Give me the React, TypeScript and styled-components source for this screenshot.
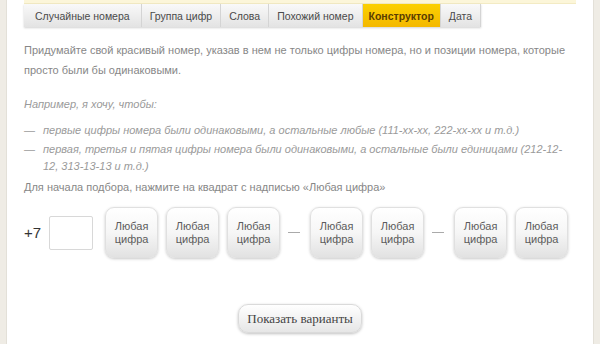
import React from 'react'
import styled, { createGlobalStyle } from 'styled-components'

const GlobalStyle = createGlobalStyle`
	html, body {
		margin: 0;
		padding: 0;
		background: #fff;
	}
	body {
		font-family: 'Liberation Sans', Arial, sans-serif;
		width: 600px;
		height: 344px;
		overflow: hidden;
	}
`

const Page = styled.div`
	display: flex;
	width: 600px;
	height: 344px;
`
const Rail = styled.div`
	width: 6px;
	flex-shrink: 0;
	background: #efece5;
	border-right: 1px solid #e3e0d8;
`
const RightRail = styled.div`
	width: 6px;
	flex-shrink: 0;
	background: #efece5;
	border-left: 1px solid #e3e0d8;
`
const Main = styled.div`
	flex: 1;
	padding: 0 17px 0 17px;
	display: flex;
	flex-direction: column;
`
const TopStrip = styled.div`
	height: 3px;
	background: #fcf6d9;
	border-bottom: 1px solid #f3ebc4;
`
const Tabs = styled.div`
	display: flex;
	height: 23px;
	align-self: flex-start;
	box-shadow: 0 1px 2px rgba(0, 0, 0, 0.18);
`
const Tab = styled.div<{ $active?: boolean }>`
	display: flex;
	align-items: center;
	padding: 0 ${(p) => (p.$active ? 6 : 8)}px;
	font-size: 10.5px;
	color: ${(p) => (p.$active ? '#5a3d00' : '#4a4a4a')};
	font-weight: ${(p) => (p.$active ? 'bold' : 'normal')};
	background: ${(p) =>
		p.$active
			? 'linear-gradient(#fbd000, #f4b800)'
			: 'linear-gradient(#f9f9f9, #e3e3e3)'};
	border-right: 1px solid #d4d4d4;
	white-space: nowrap;
	&:first-child {
		padding: 0 11px;
	}
`
const Content = styled.div`
	padding-top: 13px;
	font-size: 11px;
	line-height: 20px;
	color: #878787;
`
const Intro = styled.p`
	margin: 0 0 14px;
`
const Example = styled.p`
	margin: 0 0 8px;
	font-style: italic;
	color: #9a9a9a;
`
const List = styled.ul`
	margin: 0;
	padding: 0;
	list-style: none;
	font-style: italic;
	color: #9a9a9a;
`
const Item = styled.li`
	display: flex;
	line-height: 17px;
	margin-bottom: 2px;
	> span:first-child {
		width: 19px;
		flex-shrink: 0;
		font-style: normal;
	}
`
const Hint = styled.p`
	margin: 0;
	line-height: 20px;
`
const NumberRow = styled.div`
	display: flex;
	align-items: center;
	margin-top: 10px;
`
const Prefix = styled.span`
	font-size: 15px;
	color: #333;
	margin-right: 8px;
`
const CodeBox = styled.div`
	width: 42px;
	height: 32px;
	border: 1px solid #d8d8d8;
	border-radius: 2px;
	margin-right: 12px;
	background: #fff;
`
const Digit = styled.button`
	width: 53px;
	height: 51px;
	margin-right: 8px;
	border: 1px solid #e0e0e0;
	border-radius: 9px;
	background: linear-gradient(#ffffff 0%, #f6f6f6 50%, #e2e2e2 100%);
	box-shadow: 0 1px 3px rgba(0, 0, 0, 0.22);
	font-family: 'Liberation Sans', Arial, sans-serif;
	font-size: 11px;
	line-height: 13px;
	color: #5c5c5c;
	padding: 0;
	cursor: pointer;
`
const Dash = styled.span`
	width: 12px;
	height: 1px;
	background: #aaa;
	margin: 0 10px 0 0;
`
const Footer = styled.div`
	display: flex;
	justify-content: center;
	margin-top: 46px;
`
const ShowButton = styled.button`
	width: 124px;
	height: 29px;
	border: 1px solid #dadada;
	border-radius: 10px;
	background: linear-gradient(#ffffff, #e6e6e6);
	box-shadow: 0 1px 3px rgba(0, 0, 0, 0.25);
	font-family: 'Liberation Serif', 'Times New Roman', serif;
	font-size: 13px;
	color: #444;
	padding: 0;
	cursor: pointer;
`

const tabs = ['Случайные номера', 'Группа цифр', 'Слова', 'Похожий номер', 'Конструктор', 'Дата']
const groups = [3, 2, 2]

const App = () => {
	return (
		<Page>
			<GlobalStyle />
			<Rail />
			<Main>
				<TopStrip />
				<Tabs>
					{tabs.map((t) => (
						<Tab key={t} $active={t === 'Конструктор'}>
							{t}
						</Tab>
					))}
				</Tabs>
				<Content>
					<Intro>
						Придумайте свой красивый номер, указав в нем не только цифры номера, но и позиции номера, которые
						просто были бы одинаковыми.
					</Intro>
					<Example>Например, я хочу, чтобы:</Example>
					<List>
						<Item>
							<span>—</span>
							<span>первые цифры номера были одинаковыми, а остальные любые (111-хх-хх, 222-хх-хх и т.д.)</span>
						</Item>
						<Item>
							<span>—</span>
							<span>
								первая, третья и пятая цифры номера были одинаковыми, а остальные были единицами (212-12-12,
								313-13-13 и т.д.)
							</span>
						</Item>
					</List>
					<Hint>Для начала подбора, нажмите на квадрат с надписью «Любая цифра»</Hint>
					<NumberRow>
						<Prefix>+7</Prefix>
						<CodeBox />
						{groups.map((n, gi) => (
							<React.Fragment key={gi}>
								{gi > 0 && <Dash />}
								{Array.from({ length: n }).map((_, i) => (
									<Digit key={i}>
										Любая
										<br />
										цифра
									</Digit>
								))}
							</React.Fragment>
						))}
					</NumberRow>
					<Footer>
						<ShowButton>Показать варианты</ShowButton>
					</Footer>
				</Content>
			</Main>
			<RightRail />
		</Page>
	)
}

export default App
